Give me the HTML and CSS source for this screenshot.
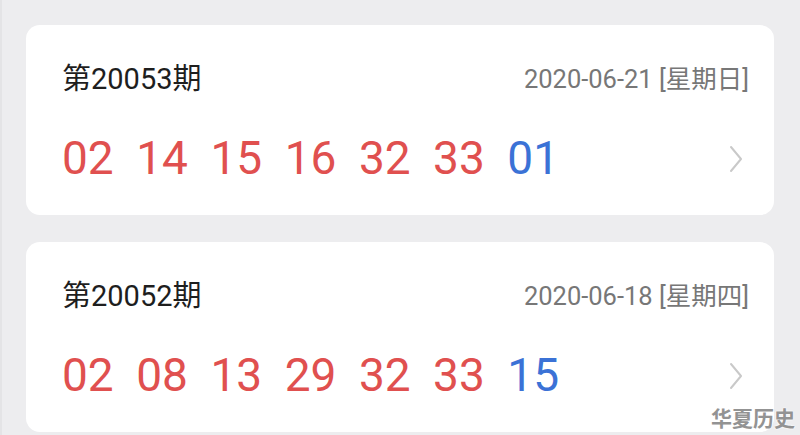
FILE: index.html
```html
<!DOCTYPE html>
<html lang="zh-CN">
<head>
<meta charset="utf-8">
<title>开奖历史</title>
<link rel="stylesheet" href="styles.css">
</head>
<body>
<main class="list">
  <section class="draw-card">
    <header class="draw-head">
      <span class="issue">第20053期</span>
      <span class="date">2020-06-21 [星期日]</span>
    </header>
    <div class="draw-balls">
      <span class="ball red">02</span>
      <span class="ball red">14</span>
      <span class="ball red">15</span>
      <span class="ball red">16</span>
      <span class="ball red">32</span>
      <span class="ball red">33</span>
      <span class="ball blue">01</span>
      <svg class="chevron" viewBox="0 0 14 28" width="14" height="28"><path d="M2 2 L12 14 L2 26" fill="none" stroke="#c9c9c9" stroke-width="2" stroke-linecap="round" stroke-linejoin="round"/></svg>
    </div>
  </section>
  <section class="draw-card">
    <header class="draw-head">
      <span class="issue">第20052期</span>
      <span class="date">2020-06-18 [星期四]</span>
    </header>
    <div class="draw-balls">
      <span class="ball red">02</span>
      <span class="ball red">08</span>
      <span class="ball red">13</span>
      <span class="ball red">29</span>
      <span class="ball red">32</span>
      <span class="ball red">33</span>
      <span class="ball blue">15</span>
      <svg class="chevron" viewBox="0 0 14 28" width="14" height="28"><path d="M2 2 L12 14 L2 26" fill="none" stroke="#c9c9c9" stroke-width="2" stroke-linecap="round" stroke-linejoin="round"/></svg>
    </div>
  </section>
</main>
<div class="watermark">华夏历史</div>
</body>
</html>
```

FILE: styles.css
```css
html, body {
  margin: 0;
  height: 100%;
}

body {
  background: #ededef;
  border-left: 2px solid #e4e4e6;
  box-sizing: border-box;
  font-family: Roboto, "Noto Sans CJK SC", sans-serif;
  overflow: hidden;
  position: relative;
}

.list {
  display: flex;
  flex-direction: column;
  gap: 27px;
  padding: 25px 26px 0 24px;
}

.draw-card {
  background: #ffffff;
  border-radius: 14px;
  height: 190px;
  box-sizing: border-box;
  padding: 34px 25px 0 36px;
  display: flex;
  flex-direction: column;
  gap: 32px;
}

.draw-head {
  display: flex;
  justify-content: space-between;
  align-items: center;
  height: 40px;
}

.issue {
  font-size: 29px;
  color: #1e1e1e;
  line-height: 40px;
}

.date {
  font-size: 25.5px;
  color: #777777;
  line-height: 40px;
}

.draw-balls {
  display: flex;
  align-items: center;
  gap: 22.5px;
  height: 54px;
}

.ball {
  font-size: 46px;
  line-height: 54px;
}

.ball.red {
  color: #e0504f;
}

.ball.blue {
  color: #3b72d6;
}

.chevron {
  margin-left: auto;
  margin-right: 6px;
  margin-top: 2px;
}

.watermark {
  position: absolute;
  right: 5px;
  bottom: 6px;
  font-family: "Noto Sans CJK SC", sans-serif;
  font-weight: 700;
  font-size: 21px;
  line-height: 24px;
  color: #939393;
  text-shadow: 0 0 2px #ffffff, 0 0 2px #ffffff;
}
```
